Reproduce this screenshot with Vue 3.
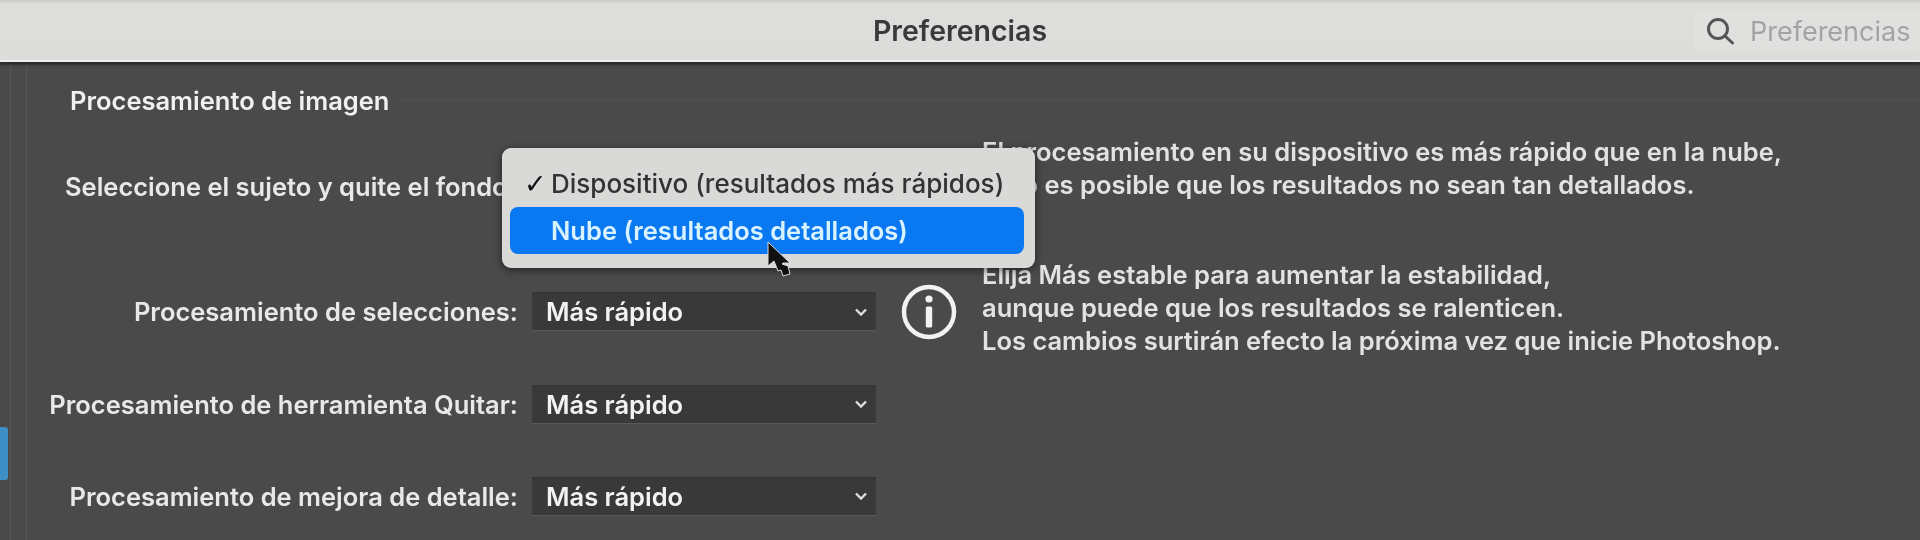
<script setup>
const rows = [
  { label: 'Procesamiento de selecciones:', info: true },
  { label: 'Procesamiento de herramienta Quitar:' },
  { label: 'Procesamiento de mejora de detalle:' }
]
</script>

<template>
  <div class="window">
    <header class="titlebar">
      <div class="title">Preferencias</div>
      <div class="search">
        <svg class="search-icon" width="30" height="30" viewBox="0 0 30 30" fill="none" stroke="#555" stroke-width="3">
          <circle cx="13" cy="13" r="9.5" />
          <path d="M20 20l7.5 7" stroke-linecap="round" />
        </svg>
        <span>Preferencias</span>
      </div>
    </header>
    <main class="panel">
      <aside class="rail"><div class="rail-tab"></div></aside>
      <section class="content">
        <h2 class="section-title">Procesamiento de imagen</h2>
        <div class="form">
          <div class="subject-label">Seleccione el sujeto y quite el fondo:</div>
          <div class="note note-top">El procesamiento en su dispositivo es más rápido que en la nube,<br />pero es posible que los resultados no sean tan detallados.</div>
          <template v-for="row in rows" :key="row.label">
            <div class="label">{{ row.label }}</div>
            <div class="select"><span>Más rápido</span>
              <svg width="14" height="10" viewBox="0 0 14 10" fill="none" stroke="#ddd" stroke-width="2.4"><path d="M2 2.5l5 5 5-5" /></svg>
            </div>
            <div class="info-cell">
              <svg v-if="row.info" width="56" height="56" viewBox="0 0 56 56" fill="none">
                <circle cx="28" cy="28" r="25" stroke="#f2f2f2" stroke-width="4.5" />
                <circle cx="28" cy="15" r="3.6" fill="#f2f2f2" />
                <rect x="24.8" y="22.5" width="6.4" height="21" rx="1.5" fill="#f2f2f2" />
              </svg>
            </div>
            <div v-if="row.info" class="note note-bottom">Elija Más estable para aumentar la estabilidad,<br />aunque puede que los resultados se ralenticen.<br />Los cambios surtirán efecto la próxima vez que inicie Photoshop.</div>
            <div v-else></div>
          </template>
        </div>
        <div class="menu">
          <div class="menu-item"><span class="check">✓</span>Dispositivo (resultados más rápidos)</div>
          <div class="menu-item active">Nube (resultados detallados)</div>
        </div>
        <svg class="cursor" width="30" height="40" viewBox="0 0 30 40">
          <path d="M3 1v24l6-5 4 10 3-1 2 6 7-2-2-8-6-2 1-1h7z" fill="#111" stroke="#ddd" stroke-width="1" />
        </svg>
      </section>
    </main>
  </div>
</template>

<style>
html, body { margin: 0; background: #4a4a4a; overflow: hidden; }
</style>

<style scoped>
.window {
  width: 1920px;
  height: 540px;
  display: flex;
  flex-direction: column;
  overflow: hidden;
  font-family: Inter, "Liberation Sans", Arial, sans-serif;
  background: #4a4a4a;
}
.titlebar {
  height: 60px;
  flex: none;
  display: flex;
  align-items: center;
  justify-content: flex-end;
  position: relative;
  background: linear-gradient(#c9c9c7 0, #dededc 4px, #dcdcda 100%);
  border-bottom: 2px solid #f0f0ee;
  box-shadow: 0 3px 2px #2c2c2c;
}
.title {
  position: absolute;
  left: 0;
  right: 0;
  text-align: center;
  font-size: 28.5px;
  font-weight: 600;
  color: #3a3a3a;
  filter: blur(0.7px);
}
.search {
  width: 215px;
  height: 42px;
  display: flex;
  align-items: center;
  gap: 15px;
  padding-left: 11px;
  margin-top: 2px;
  background: #e0e0de;
  border-radius: 6px 0 0 6px;
  font-size: 27px;
  color: #a3a3a3;
  white-space: nowrap;
  overflow: hidden;
  filter: blur(0.7px);
}
.search-icon { flex: none; }
.panel {
  flex: 1;
  display: flex;
  min-height: 0;
}
.rail {
  width: 27px;
  flex: none;
  padding-top: 365px;
  box-sizing: border-box;
  border-right: 1px solid #565656;
  background: linear-gradient(#565656, #565656) 10px 0 / 1px 100% no-repeat;
}
.rail-tab {
  width: 8px;
  height: 53px;
  background: #3f8fc7;
  border-radius: 0 3px 3px 0;
}
.content {
  flex: 1;
  position: relative;
  min-width: 0;
  color: #ececec;
}
.section-title {
  margin: 0;
  padding-left: 43px;
  padding-top: 24px;
  height: 44px;
  display: flex;
  gap: 10px;
  font-size: 25.5px;
  line-height: 30px;
  font-weight: 600;
  color: #f0f0f0;
  filter: blur(0.7px);
}
.section-title::after {
  content: "";
  flex: 1;
  height: 1px;
  margin-top: 14px;
  background: #505050;
}
.form {
  display: grid;
  grid-template-columns: 505px 344px 106px 1fr;
  grid-template-rows: 135px 93px 92px 92px;
}
.subject-label {
  grid-column: 1 / 3;
  padding-left: 38px;
  font-size: 25.5px;
  line-height: 30px;
  padding-top: 42px;
  font-weight: 600;
  color: #e8e8e8;
  white-space: nowrap;
  filter: blur(0.7px);
}
.note {
  font-size: 25.5px;
  line-height: 33px;
  font-weight: 600;
  color: #e2e2e2;
  white-space: nowrap;
  filter: blur(0.7px);
}
.note-top {
  grid-column: 3 / 5;
  padding-left: 106px;
  padding-top: 5px;
}
.note-bottom {
  align-self: center;
  margin-bottom: 8px;
}
.label {
  align-self: center;
  justify-self: end;
  padding-right: 14px;
  font-size: 25.5px;
  font-weight: 600;
  color: #e8e8e8;
  white-space: nowrap;
  filter: blur(0.7px);
}
.select {
  align-self: center;
  height: 37px;
  display: flex;
  align-items: center;
  justify-content: space-between;
  padding: 0 8px 0 14px;
  background: #393939;
  border-top: 1px solid #333;
  border-bottom: 1px solid #5a5a5a;
  font-size: 25.5px;
  font-weight: 600;
  color: #f2f2f2;
  filter: blur(0.6px);
}
.info-cell {
  align-self: center;
  display: flex;
  padding-left: 25px;
}
.menu {
  position: absolute;
  left: 475px;
  top: 86px;
  width: 533px;
  height: 120px;
  box-sizing: border-box;
  padding: 12px 11px 14px 8px;
  display: flex;
  flex-direction: column;
  background: #d9d9d7;
  border-radius: 9px;
  box-shadow: 0 2px 8px rgba(0, 0, 0, 0.55);
  filter: blur(0.6px);
}
.menu-item {
  height: 47px;
  display: flex;
  align-items: center;
  padding-left: 41px;
  position: relative;
  font-size: 26px;
  font-weight: 500;
  color: #333;
  border-radius: 8px;
  white-space: nowrap;
}
.check {
  position: absolute;
  left: 14px;
  color: #111;
  font-family: "DejaVu Sans", sans-serif;
  font-weight: 700;
  font-size: 27px;
}
.menu-item.active {
  background: #0a78f0;
  color: #d8f2ff;
  font-size: 25.5px;
  font-weight: 600;
}
.cursor {
  position: absolute;
  left: 738px;
  top: 179px;
}
</style>
